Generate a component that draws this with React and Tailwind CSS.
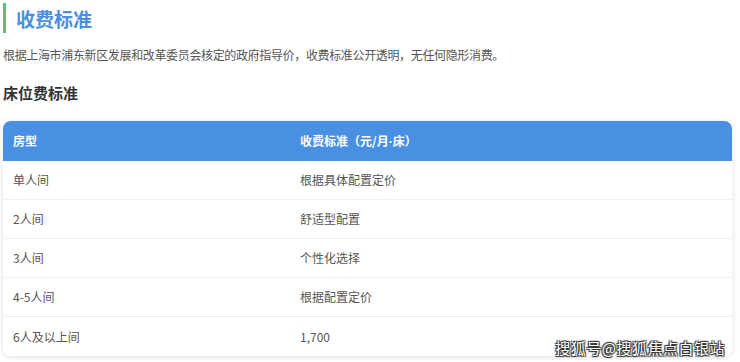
export default function App() {
  const rows = [
    ["单人间", "根据具体配置定价"],
    ["2人间", "舒适型配置"],
    ["3人间", "个性化选择"],
    ["4-5人间", "根据配置定价"],
    ["6人及以上间", "1,700"],
  ];
  const font = { fontFamily: '"Noto Sans CJK SC", "Noto Sans", sans-serif' };
  return (
    <div className="relative w-[740px] h-[362px] bg-white overflow-hidden" style={font}>
      <div className="pl-[3px] pt-[3px] w-[732px]">
        <div className="flex items-center h-[30px] border-l-[3px] border-[#52c77a] pl-[10px]">
          <span className="text-[19px] font-bold text-[#4a90e2] leading-none">收费标准</span>
        </div>
        <p className="mt-[13px] text-[12px] leading-[18px] text-[#555] tracking-[-0.35px]">
          根据上海市浦东新区发展和改革委员会核定的政府指导价，收费标准公开透明，无任何隐形消费。
        </p>
        <h3 className="mt-[19px] text-[15px] font-bold text-[#333] leading-[20px]">床位费标准</h3>
        <div className="mt-[18px] rounded-[8px] overflow-hidden shadow-[0_1px_6px_rgba(0,0,0,0.12)]">
          <div className="flex h-[40px] items-center bg-[#4a90e2] text-white text-[12px] font-bold">
            <div className="w-[287px] pl-[10px]">房型</div>
            <div className="flex-1 pl-[10px]">
              收费标准（元/月<span className="font-['Liberation_Sans']">·</span>床）
            </div>
          </div>
          {rows.map((r, i) => (
            <div
              key={i}
              className={`flex h-[39px] items-center text-[12px] text-[#555] bg-white ${i < rows.length - 1 ? "border-b border-[#f0f0f0]" : ""}`}
            >
              <div className="w-[287px] pl-[10px]">{r[0]}</div>
              <div className="flex-1 pl-[10px]">{r[1]}</div>
            </div>
          ))}
        </div>
      </div>
      <div
        className="absolute right-[15px] bottom-[7px] text-[15px] text-white leading-none tracking-[0.5px]"
        style={{ textShadow: "0 0 1px #333, 1px 1px 1px #333, -1px -1px 1px #333, 1px -1px 1px #333, -1px 1px 1px #333" }}
      >
        搜狐号@搜狐焦点白银站
      </div>
    </div>
  );
}
